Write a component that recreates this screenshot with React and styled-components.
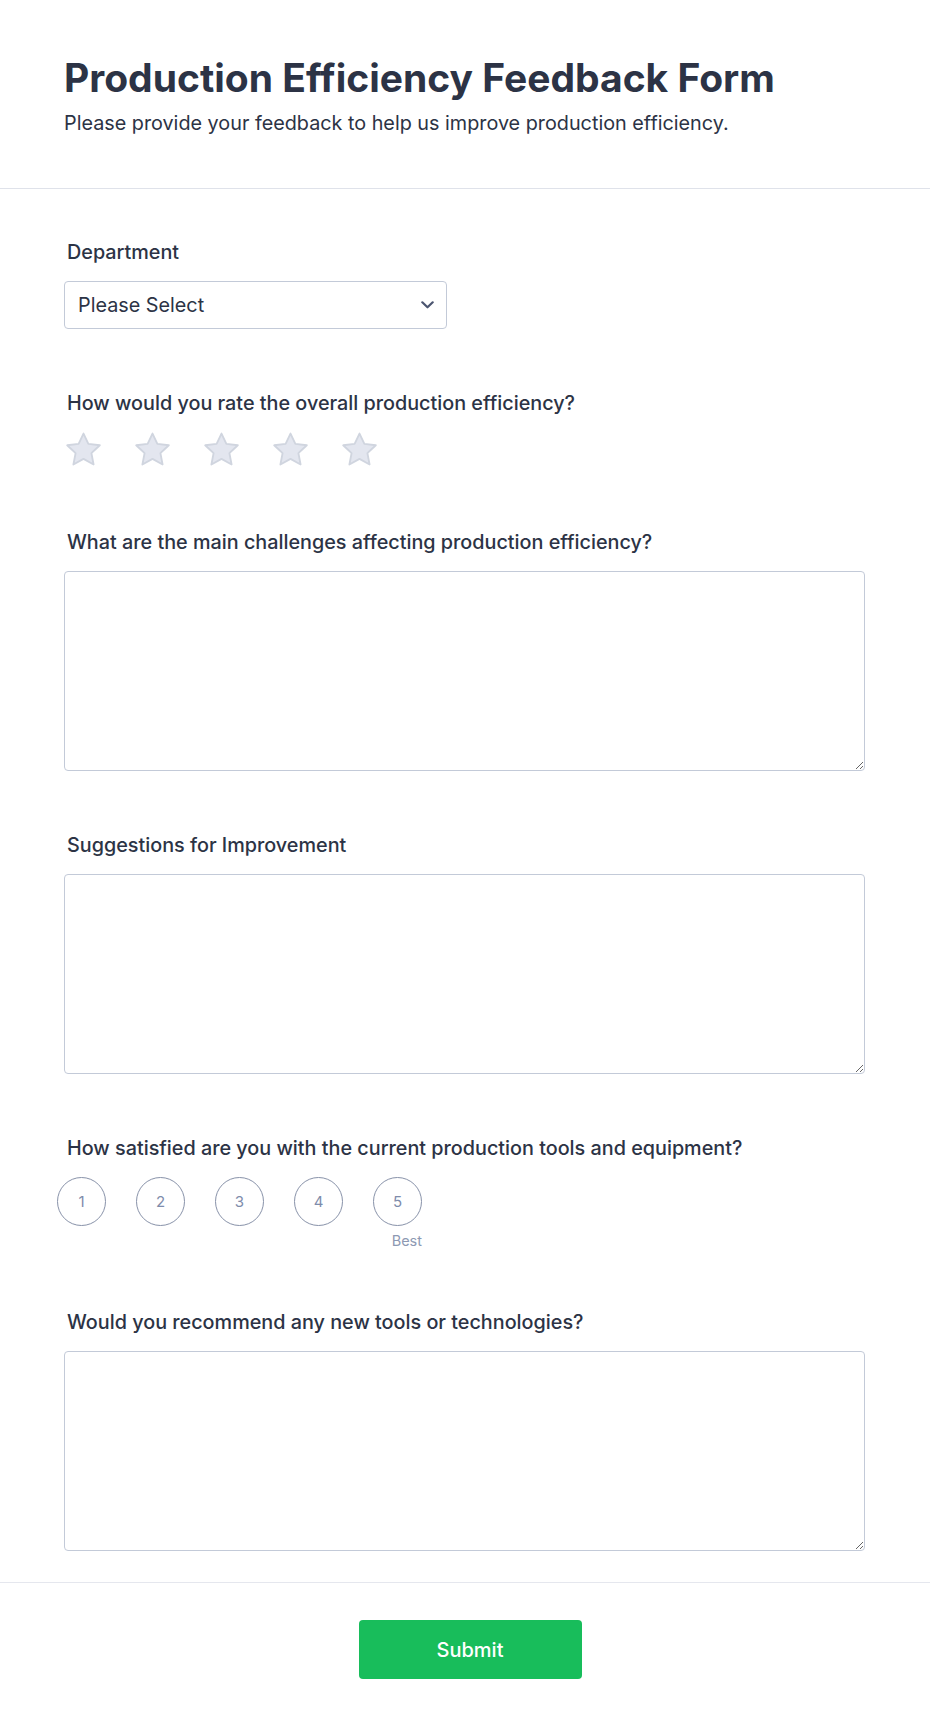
import React from "react";
import styled, { createGlobalStyle } from "styled-components";

const GlobalStyle = createGlobalStyle`
  * { box-sizing: border-box; }
  body {
    margin: 0;
    background: #fff;
    font-family: Inter, "Noto Sans", sans-serif;
    color: #2c3345;
  }
`;

const Page = styled.div`
  width: 930px;
  background: #fff;
`;

const Header = styled.header`
  padding: 54px 64px 52px;
  border-bottom: 1px solid #dfe2ea;
`;

const Title = styled.h1`
  margin: 0 0 9px;
  font-size: 39px;
  line-height: 47px;
  font-weight: 700;
`;

const Subtitle = styled.p`
  margin: 0;
  font-size: 19.8px;
  line-height: 26px;
`;

const Body = styled.div`
  padding: 50px 65px 31px 64px;
  display: flex;
  flex-direction: column;
  gap: 61px;
`;

const Field = styled.div`
  display: flex;
  flex-direction: column;
  align-items: flex-start;
`;

const Label = styled.label`
  font-size: 19.8px;
  line-height: 26px;
  font-weight: 500;
  margin: 0 0 16px 3px;
`;

const SelectBox = styled.div`
  width: 383px;
  height: 48px;
  border: 1px solid #c3cad8;
  border-radius: 4px;
  display: flex;
  align-items: center;
  justify-content: space-between;
  padding: 0 12px 0 13px;
  font-size: 19.8px;
`;

const Stars = styled.div`
  display: flex;
  gap: 32px;
  margin-left: 1px;
`;

const Area = styled.textarea`
  width: 100%;
  height: 200px;
  border: 1px solid #c3cad8;
  border-radius: 4px;
  resize: vertical;
  font-family: inherit;
  font-size: 16px;
  padding: 10px 12px;
  outline: none;
`;

const Scale = styled.div`
  display: flex;
  gap: 30px;
  margin-left: -7px;
`;

const ScaleItem = styled.div`
  display: flex;
  flex-direction: column;
  align-items: flex-end;
`;

const Circle = styled.div`
  width: 49px;
  height: 49px;
  border-radius: 50%;
  border: 1px solid #8892a9;
  display: flex;
  align-items: center;
  justify-content: center;
  font-size: 15px;
  color: #7e8cab;
`;

const Hint = styled.span`
  margin-top: 8px;
  font-size: 14.5px;
  line-height: 14px;
  color: #8d99b3;
  visibility: ${(p) => (p.$show ? "visible" : "hidden")};
`;

const Footer = styled.footer`
  border-top: 1px solid #e5e7ee;
  padding: 37px 0 50px 10px;
  display: flex;
  justify-content: center;
`;

const Submit = styled.button`
  width: 223px;
  height: 59px;
  border: none;
  border-radius: 4px;
  background: #18bd5b;
  color: #fff;
  font-family: inherit;
  font-size: 20px;
  font-weight: 500;
`;

const Star = () => (
  <svg width="37" height="36" viewBox="1 1.3 22 21.4">
    <path
      d="M12 2.2l2.9 6.2 6.8.8-5 4.7 1.3 6.7L12 17.3l-6 3.3 1.3-6.7-5-4.7 6.8-.8z"
      fill="#e3e6ef"
      stroke="#d0d5df"
      strokeWidth="1.1"
      strokeLinejoin="round"
    />
  </svg>
);

const Chevron = () => (
  <svg width="13" height="8" viewBox="0 0 13 8">
    <path d="M1.3 1.3l5.2 5 5.2-5" fill="none" stroke="#4b5570" strokeWidth="2.2" strokeLinecap="round" strokeLinejoin="round" />
  </svg>
);

export default function App() {
  return (
    <Page>
      <GlobalStyle />
      <Header>
        <Title>Production Efficiency Feedback Form</Title>
        <Subtitle>Please provide your feedback to help us improve production efficiency.</Subtitle>
      </Header>
      <Body>
        <Field>
          <Label>Department</Label>
          <SelectBox>
            <span>Please Select</span>
            <Chevron />
          </SelectBox>
        </Field>
        <Field>
          <Label>How would you rate the overall production efficiency?</Label>
          <Stars>
            {[1, 2, 3, 4, 5].map((n) => (
              <Star key={n} />
            ))}
          </Stars>
        </Field>
        <Field>
          <Label>What are the main challenges affecting production efficiency?</Label>
          <Area />
        </Field>
        <Field>
          <Label>Suggestions for Improvement</Label>
          <Area />
        </Field>
        <Field>
          <Label>How satisfied are you with the current production tools and equipment?</Label>
          <Scale>
            {[1, 2, 3, 4, 5].map((n) => (
              <ScaleItem key={n}>
                <Circle>{n}</Circle>
                <Hint $show={n === 5}>Best</Hint>
              </ScaleItem>
            ))}
          </Scale>
        </Field>
        <Field>
          <Label>Would you recommend any new tools or technologies?</Label>
          <Area />
        </Field>
      </Body>
      <Footer>
        <Submit>Submit</Submit>
      </Footer>
    </Page>
  );
}
